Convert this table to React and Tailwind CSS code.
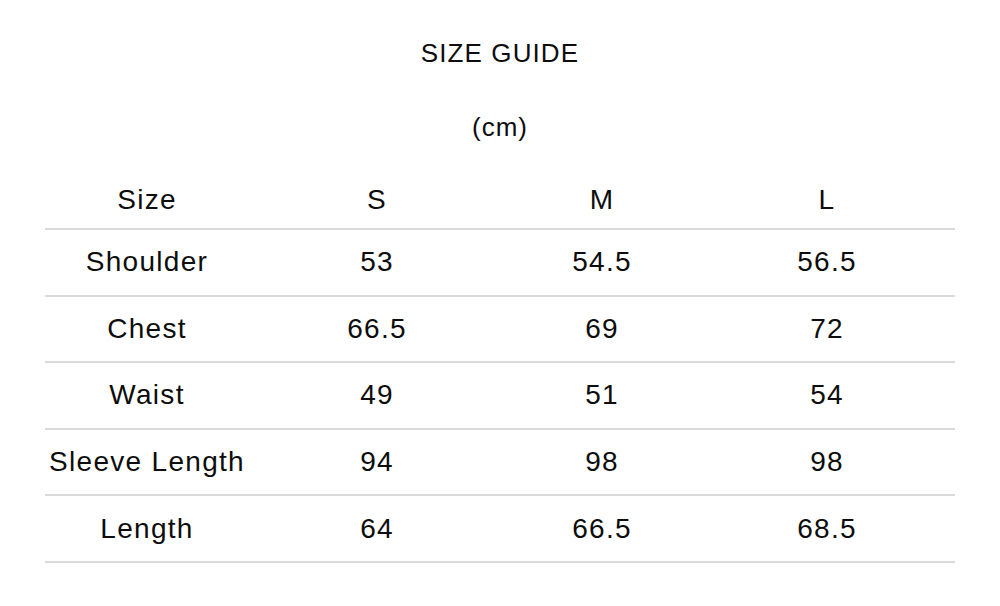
const columns = ["Size", "S", "M", "L"];

const rows = [
  ["Shoulder", "53", "54.5", "56.5"],
  ["Chest", "66.5", "69", "72"],
  ["Waist", "49", "51", "54"],
  ["Sleeve Length", "94", "98", "98"],
  ["Length", "64", "66.5", "68.5"],
];

export default function App() {
  return (
    <div className="w-[1000px] h-[606px] bg-white text-[#0d0d0d] font-['Liberation_Sans',Arial,sans-serif] px-[45px] pt-[38px]">
      <h1 className="text-center text-[26px] leading-[30px] tracking-[1.1px]">SIZE GUIDE</h1>
      <p className="mt-[44px] text-center text-[26px] leading-[30px] tracking-[1px]">(cm)</p>

      <div className="mt-[26px]">
        {/* header */}
        <div className="grid grid-cols-[204px_256px_194px_256px] h-[62px] items-center border-b-2 border-[#dadada] text-[28px] tracking-[1.3px]">
          {columns.map((c) => (
            <div key={c} className="text-center pt-[4px]">
              {c}
            </div>
          ))}
        </div>

        {/* measurements */}
        {rows.map((row) => (
          <div
            key={row[0]}
            className="grid grid-cols-[204px_256px_194px_256px] h-[66.6px] items-center border-b-2 border-[#dadada] text-[28px] tracking-[1.3px]"
          >
            {row.map((cell, i) => (
              <div key={i} className="text-center">
                {cell}
              </div>
            ))}
          </div>
        ))}
      </div>
    </div>
  );
}
